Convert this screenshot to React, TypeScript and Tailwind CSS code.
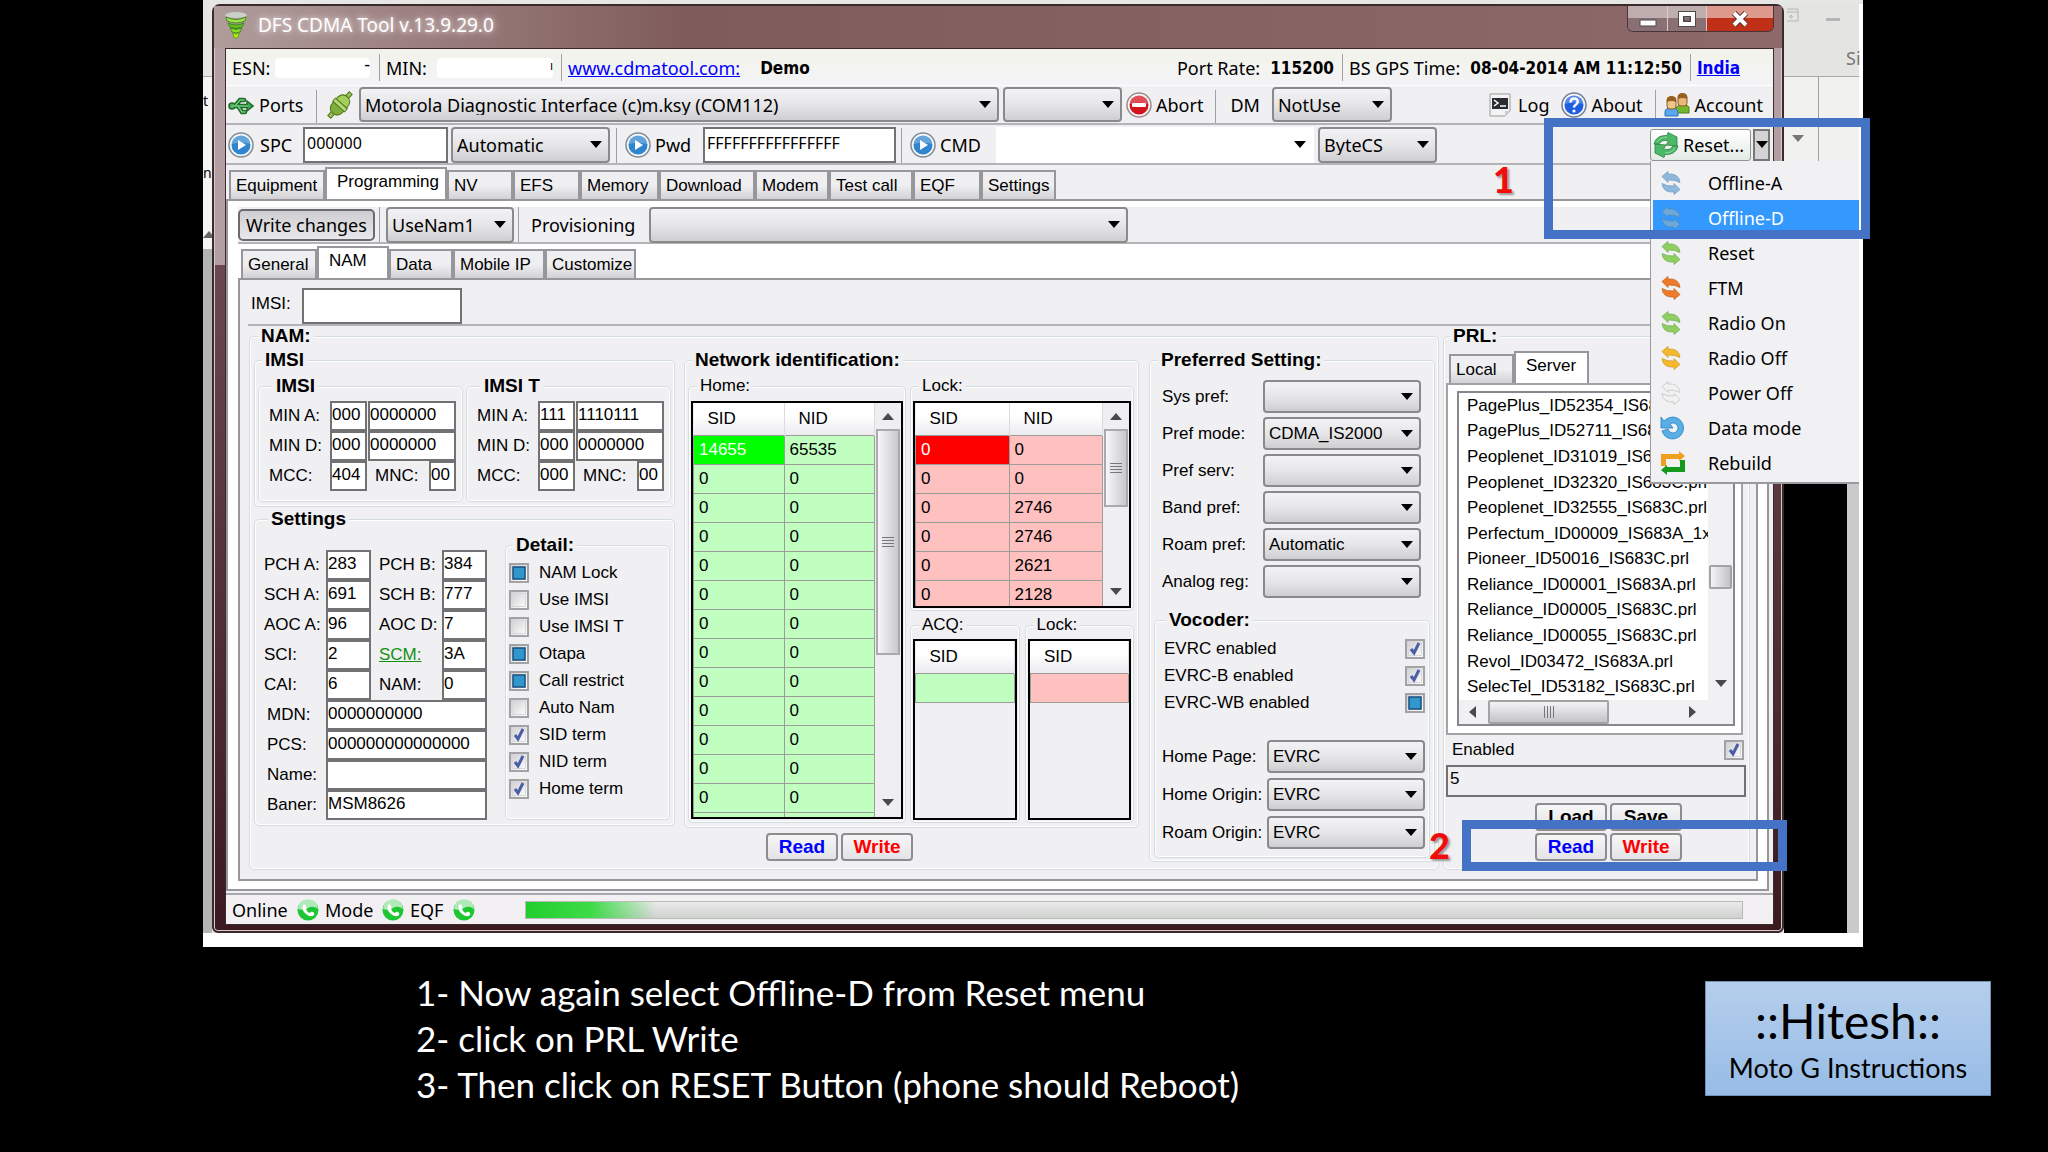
import type { ReactNode } from 'react';
import clsx from 'clsx';

const MAIN_TABS = ['Equipment', 'Programming', 'NV', 'EFS', 'Memory', 'Download', 'Modem', 'Test call', 'EQF', 'Settings'];
const MAIN_TAB_WIDTHS = ['w-[96px]', 'w-[122px]', 'w-[66px]', 'w-[67px]', 'w-[79px]', 'w-[96px]', 'w-[74px]', 'w-[84px]', 'w-[68px]', 'w-[75px]'];
const NAM_TABS = ['General', 'NAM', 'Data', 'Mobile IP', 'Customize'];
const NAM_TAB_WIDTHS = ['w-[76px]', 'w-[72px]', 'w-[64px]', 'w-[92px]', 'w-[91px]'];

const PRL_FILES = [
  'PagePlus_ID52354_IS683C.prl',
  'PagePlus_ID52711_IS683C.prl',
  'Peoplenet_ID31019_IS683C.prl',
  'Peoplenet_ID32320_IS683C.prl',
  'Peoplenet_ID32555_IS683C.prl',
  'Perfectum_ID00009_IS683A_1x.prl',
  'Pioneer_ID50016_IS683C.prl',
  'Reliance_ID00001_IS683A.prl',
  'Reliance_ID00005_IS683C.prl',
  'Reliance_ID00055_IS683C.prl',
  'Revol_ID03472_IS683A.prl',
  'SelecTel_ID53182_IS683C.prl',
];

const HOME_ROWS = [['14655', '65535'], ...Array.from({ length: 13 }, () => ['0', '0'])];
const LOCK_ROWS = [['0', '0'], ['0', '0'], ['0', '2746'], ['0', '2746'], ['0', '2621'], ['0', '2128']];

type CheckState = 'on' | 'off' | 'mixed';

const DETAILS: [string, CheckState][] = [
  ['NAM Lock', 'mixed'],
  ['Use IMSI', 'off'],
  ['Use IMSI T', 'off'],
  ['Otapa', 'mixed'],
  ['Call restrict', 'mixed'],
  ['Auto Nam', 'off'],
  ['SID term', 'on'],
  ['NID term', 'on'],
  ['Home term', 'on'],
];

/* ---------- icons ---------- */

const Triangle = ({ dir = 'down', className }: { dir?: 'up' | 'down' | 'left' | 'right'; className?: string }) => {
  const points = { down: '0,2 12,2 6,9', up: '0,9 12,9 6,2', left: '9,0 9,12 2,6', right: '3,0 3,12 10,6' }[dir];
  return (
    <svg viewBox="0 0 12 12" className={clsx('size-3 shrink-0', className)} fill="currentColor">
      <polygon points={points} />
    </svg>
  );
};

const AppIcon = () => (
  <svg viewBox="0 0 24 28" className="h-7 w-6 shrink-0">
    <ellipse cx="12" cy="4" rx="11" ry="3" fill="#c9cfc9" />
    <path d="M2 6q10 5 20 0l-1 4q-9 4-18 0z" fill="#9fe04a" stroke="#2e7d0e" strokeWidth=".8" />
    <path d="M4 12q8 4 16 0l-2 4q-6 3-12 0z" fill="#63c41c" stroke="#2e7d0e" strokeWidth=".8" />
    <path d="M6 17q6 3 12 0l-2 4q-4 2-8 0z" fill="#8be02a" stroke="#2e7d0e" strokeWidth=".8" />
    <path d="M8.500 22q3.500 2 7 0l-2 5h-3z" fill="#b6ee13" stroke="#4e9a0e" strokeWidth=".8" />
  </svg>
);

const UsbIcon = () => (
  <svg viewBox="0 0 26 20" className="h-5 w-[26px] shrink-0" fill="none" stroke="#1f6b2c" strokeLinecap="round">
    <path d="M3 11h17M7 11l5-6h4M10 11l4 6h3" strokeWidth="4.500" />
    <path d="M19 6l6 5-6 5z" fill="#3fa34d" strokeWidth="1.500" />
    <circle cx="4" cy="11" r="3" fill="#4db35c" strokeWidth="1.500" />
    <path d="M5 11h15M7 11l5-6h4M10 11l4 6h3" stroke="#6fcb7a" strokeWidth="1.500" />
  </svg>
);

const PlugIcon = () => (
  <svg viewBox="0 0 28 28" className="size-7 shrink-0">
    <g transform="rotate(42 14 14)" stroke="#4f7a1d" strokeWidth="1">
      <rect x="12" y="-2" width="4" height="7" fill="#9bbf5a" />
      <rect x="12" y="23" width="4" height="7" fill="#9bbf5a" />
      <path d="M7 12q0-9 7-9t7 9z" fill="#a5cf5c" />
      <path d="M7 16q0 9 7 9t7-9z" fill="#7fae3a" />
      <path d="M6 12h16v4H6z" fill="#b5d877" />
    </g>
  </svg>
);

const Round = ({ color, ring, children }: { color: string; ring: string; children: ReactNode }) => (
  <svg viewBox="0 0 26 26" className="size-[26px] shrink-0">
    <circle cx="13" cy="13" r="12" fill="#f4f6f8" stroke={ring} strokeWidth="1.500" />
    <circle cx="13" cy="13" r="9.500" fill={color} />
    <path d="M4 12a9 9 0 0 1 18 0q-9-3-18 0z" fill="#fff" opacity=".25" />
    {children}
  </svg>
);

const PlayIcon = () => (
  <Round color="#2f86cf" ring="#7f8b95">
    <path d="M10 8l8 5-8 5z" fill="#fff" />
  </Round>
);

const AbortIcon = () => (
  <Round color="#d4141c" ring="#a08a8a">
    <rect x="6" y="11" width="14" height="4" rx="1" fill="#fff" />
  </Round>
);

const HelpIcon = () => (
  <Round color="#1d5fe0" ring="#6f7f95">
    <path d="M9.500 10.500q0-4 3.700-4t3.500 3.300q0 1.800-1.900 3t-1.800 2.700" fill="none" stroke="#fff" strokeWidth="2.500" />
    <circle cx="13" cy="19" r="1.600" fill="#fff" />
  </Round>
);

const LogIcon = () => (
  <svg viewBox="0 0 22 24" className="h-6 w-[22px] shrink-0">
    <path d="M1 1h20v17l-5 5H1z" fill="#f4f4f4" stroke="#9a9a9a" />
    <path d="M21 18h-5v5z" fill="#cfcfcf" />
    <rect x="3" y="5" width="16" height="11" fill="#2a2e30" />
    <path d="M5 7l4 3-4 3M11 13h6" fill="none" stroke="#fff" strokeWidth="1.500" />
  </svg>
);

const AccountIcon = () => (
  <svg viewBox="0 0 26 24" className="h-6 w-[26px] shrink-0">
    <path d="M12 20v-4q0-4 7-4t6 4v4z" fill="#74b52e" stroke="#4b7f18" />
    <rect x="14" y="1" width="9" height="12" rx="3" fill="#e8b878" stroke="#8a5a20" />
    <path d="M14 6V3q1-3 4.500-3T23 3v3q-4-2-9 0z" fill="#9a5f1c" />
    <path d="M1 23v-4q0-4 6-4t7 4v4z" fill="#5aa7ee" stroke="#2d6fb5" />
    <rect x="3" y="4" width="9" height="12" rx="3" fill="#f0c68a" stroke="#8a5a20" />
    <path d="M3 9V6q1-3 4.500-3T12 6v3q-4-2-9 0z" fill="#9a5f1c" />
  </svg>
);

// Two arrows chasing each other; every menu entry only changes the colour.
const SyncIcon = ({ color, edge }: { color: string; edge: string }) => (
  <svg viewBox="0 0 22 24" className="h-6 w-[22px] shrink-0" fill={color} stroke={edge} strokeWidth=".7" strokeLinejoin="round">
    <path d="M2 5.500L8 .500V3q11-1 12 8.500Q15 8.500 8 9v2.500z" />
    <path d="M20 18.500l-6 5V21Q3 22 2 12.500q5 3 12 2.500v-2.500z" />
  </svg>
);

const ResetIcon = () => (
  <svg viewBox="0 0 26 26" className="size-[26px] shrink-0" fill="#4db868" stroke="#27803f" strokeWidth=".8" strokeLinejoin="round">
    <path d="M1 12Q3 3 14 3.500L15 .500 24 5v9l-11-1 2.500-4Q8 7 6 12.500z" />
    <path d="M25 14q-2 9-13 8.500l-1 3L2 21v-9l11 1-2.500 4Q18 19 20 13.500z" />
    <path d="M4 10q3-5 10-5M22 16q-3 5-10 5" fill="none" stroke="#9fe0ae" />
  </svg>
);

const DataIcon = () => (
  <svg viewBox="0 0 24 24" className="size-6 shrink-0">
    <path d="M1 1l3 4q4-4 9-4a11 11 0 1 1-11 14l6-2q1 4 5 4a5 5 0 1 0-3-9l3 4H1z" fill="#58aee6" stroke="#2a7fc0" strokeWidth=".8" />
  </svg>
);

const RebuildIcon = () => (
  <svg viewBox="0 0 26 24" className="h-6 w-[26px] shrink-0">
    <path d="M1 15V3h18V0l6 5-6 5V8H6v7z" fill="#f0a020" />
    <path d="M25 9v12H7v3l-6-5 6-5v2h13V9z" fill="#139a1c" />
  </svg>
);

const PhoneIcon = () => (
  <svg viewBox="0 0 22 22" className="size-[22px] shrink-0">
    <circle cx="11" cy="11" r="10.500" fill="#1fc634" />
    <path d="M1 10a10 10 0 0 1 20 0q-5-4-10-1t-10 1z" fill="#d5f2d9" opacity=".8" />
    <path d="M6 6q2-2 3 1t0 3q1 3 4 4 1-2 3-1t1 3q-3 3-8-1T6 6z" fill="#fff" />
  </svg>
);

/* ---------- controls ---------- */

const Sep = ({ className }: { className?: string }) => <span className={clsx('w-px shrink-0 self-stretch bg-[#a0a0a4]', className)} />;

interface ComboProps {
  label: string;
  value?: string;
  className?: string;
  plain?: boolean;
}

const Combo = ({ label, value = '', className, plain }: ComboProps) => (
  <div className={clsx('relative shrink-0', className)}>
    <select
      aria-label={label}
      className={clsx(
        'size-full appearance-none pl-1 pr-6 outline-none',
        plain
          ? 'bg-white'
          : 'rounded-[4px] border-2 border-[#8a898c] bg-linear-to-b from-[#f3f2f4] via-[#e6e5e8] to-[#cfced1]',
      )}
    >
      <option>{value}</option>
    </select>
    <Triangle className="pointer-events-none absolute right-2 top-1/2 -mt-1.5 text-black" />
  </div>
);

const Check = ({ id, state }: { id: string; state: CheckState }) => (
  <span className="relative size-5 shrink-0">
    <input
      id={id}
      type="checkbox"
      defaultChecked={state !== 'off'}
      className="block size-5 appearance-none border-2 border-[#a3a3a6] bg-linear-to-br from-[#cfcfd2] to-white outline-1 -outline-offset-4 outline-[#d8d8dc]"
    />
    <svg viewBox="0 0 20 20" className="pointer-events-none absolute inset-0">
      {state === 'on' && <path d="M6 10l3 4 5-10" fill="none" stroke="#4c5da8" strokeWidth="3" />}
      {state === 'mixed' && <rect x="4" y="4" width="12" height="12" fill="#2f97cc" stroke="#1b4f7c" strokeWidth="1.500" />}
    </svg>
  </span>
);

interface FieldProps {
  id: string;
  value?: string;
  className?: string;
}

const Field = ({ id, value = '', className }: FieldProps) => (
  <input
    id={id}
    aria-label={id}
    defaultValue={value}
    className={clsx('h-[30px] min-w-0 shrink-0 border-2 border-[#727174] bg-white pb-0.5 outline-none', className)}
  />
);

interface GroupProps {
  title: string;
  className?: string;
  light?: boolean;
  children: ReactNode;
}

const Group = ({ title, className, light, children }: GroupProps) => (
  <fieldset className={clsx('min-w-0 rounded-[5px] border border-[#d3dde0] shadow-[inset_0_0_0_1px_#fff]', className)}>
    <legend className={clsx('bg-[#f0eff2] px-[3px] leading-5', light ? 'ml-1.5 text-[17px]' : 'ml-1 text-[19px] font-bold')}>{title}</legend>
    {children}
  </fieldset>
);

const PushButton = ({ children, className }: { children: ReactNode; className?: string }) => (
  <button className={clsx('h-7 w-[72px] rounded-[4px] border-2 border-[#8d8c90] bg-linear-to-b from-[#f6f6f7] to-[#e4e4e6] text-[19px] leading-6 font-bold', className)}>
    {children}
  </button>
);

interface TabsProps {
  names: string[];
  widths: string[];
  active: string;
}

const Tabs = ({ names, widths, active }: TabsProps) => (
  <div role="tablist" className="flex items-end">
    {names.map((name, i) => (
      <button
        key={name}
        role="tab"
        aria-selected={name === active}
        className={clsx(
          'border-2 border-b-0 border-[#97969a] text-left whitespace-nowrap',
          widths[i],
          name === active ? 'h-8 bg-white pb-1 pl-2.5' : 'h-[29px] bg-linear-to-b from-[#efeef0] from-50% to-[#d2d1d4] pl-[5px]',
        )}
      >
        {name}
      </button>
    ))}
  </div>
);

const Grip = ({ vertical }: { vertical?: boolean }) => (
  <span className={clsx('flex gap-0.5', vertical ? 'flex-row' : 'flex-col')}>
    {[0, 1, 2, 3].map((n) => (
      <i key={n} className={clsx('bg-[#77777a]', vertical ? 'h-3 w-px' : 'h-px w-3')} />
    ))}
  </span>
);

const VScroll = ({ thumb }: { thumb: string }) => (
  <div className="flex w-[26px] shrink-0 flex-col items-center bg-[#efeff1]">
    <Triangle dir="up" className="mt-2 mb-1.5 text-[#4a4a4c]" />
    <div className={clsx('flex w-6 items-center justify-center border-2 border-[#aaaaad] bg-linear-to-r from-[#f7f7f8] to-[#c9c9cc]', thumb)}>
      <Grip />
    </div>
    <Triangle className="mt-auto mb-2 text-[#4a4a4c]" />
  </div>
);

interface GridProps {
  columns: string[];
  rows: string[][];
  tone: 'green' | 'red';
  selected?: boolean;
}

const DataGrid = ({ columns, rows, tone, selected }: GridProps) => (
  <table className="w-full table-fixed border-collapse">
    <thead>
      <tr className="h-8 bg-linear-to-b from-white from-40% to-[#ececf0]">
        {columns.map((column) => (
          <th key={column} className="border-r border-[#dcdce0] pl-3.5 text-left font-normal">
            {column}
          </th>
        ))}
      </tr>
    </thead>
    <tbody>
      {rows.map((row, r) => (
        <tr key={r} className={clsx('h-[29px]', tone === 'green' ? 'bg-[#c0ffc0]' : 'bg-[#ffc0c0]')}>
          {row.map((cell, c) => (
            <td
              key={c}
              className={clsx(
                'border border-[#9a9d9a] pl-[5px]',
                selected && r === 0 && c === 0 && 'text-white',
                selected && r === 0 && c === 0 && (tone === 'green' ? 'bg-[#00ff00]' : 'bg-[#ff0000]'),
              )}
            >
              {cell}
            </td>
          ))}
        </tr>
      ))}
    </tbody>
  </table>
);

/* ---------- window parts ---------- */

const TitleBar = () => (
  <header className="flex h-[42px] items-start bg-linear-to-r from-[#b09c9c] via-[#7f5c5b] via-30% to-[#8d6a69] pl-2.5">
    <div className="flex h-full items-center gap-2.5 pb-1">
      <AppIcon />
      <h1 className="text-[19px] text-white [text-shadow:0_0_10px_#e8dede,0_0_4px_#d8c8c8]">DFS CDMA Tool v.13.9.29.0</h1>
    </div>
    <div className="mr-2 ml-auto flex h-[26px] overflow-hidden rounded-b-md border border-t-0 border-[#4a3438]">
      <button aria-label="Minimize" className="flex w-10 items-center justify-center border-r border-[#d8cccc] bg-linear-to-b from-[#c0adad] from-50% to-[#8a7072] to-50%">
        <svg viewBox="0 0 18 8" className="mt-2 h-2 w-[18px]">
          <rect x="1" y="1" width="16" height="6" fill="#fff" stroke="#4b4b50" />
        </svg>
      </button>
      <button aria-label="Maximize" className="flex w-[39px] items-center justify-center border-r border-[#d8cccc] bg-linear-to-b from-[#c0adad] from-50% to-[#8a7072] to-50%">
        <svg viewBox="0 0 18 16" className="h-4 w-[18px]" fill="none">
          <rect x="3" y="3" width="12" height="10" stroke="#4b4b50" strokeWidth="6" />
          <rect x="3" y="3" width="12" height="10" stroke="#fff" strokeWidth="4" />
          <rect x="6" y="6" width="6" height="4" stroke="#4b4b50" />
        </svg>
      </button>
      <button aria-label="Close" className="flex w-[66px] items-center justify-center bg-linear-to-b from-[#dd9a8c] from-50% to-[#c03018] to-50%">
        <svg viewBox="0 0 18 16" className="h-4 w-[18px]">
          <path d="M3 2l12 12M15 2L3 14" stroke="#55302c" strokeWidth="6" />
          <path d="M3 2l12 12M15 2L3 14" stroke="#fff" strokeWidth="4" />
        </svg>
      </button>
    </div>
  </header>
);

const Strong = ({ children, className }: { children: ReactNode; className?: string }) => (
  <b className={clsx("font-['DejaVu_Sans_Condensed','DejaVu_Sans',sans-serif] text-[17px]", className)}>{children}</b>
);

const InfoBar = () => (
  <div className="flex h-9 items-center bg-linear-to-b from-[#f2f3ea] to-[#f4f3f6] pt-px pl-1.5 whitespace-nowrap">
    <span className="w-[43px]">ESN:</span>
    <span className="h-5 w-[95px] rounded bg-white text-right leading-3">-</span>
    <Sep className="my-1 mr-1.5 ml-[9px]" />
    <span className="w-[51px]">MIN:</span>
    <span className="h-5 w-[116px] rounded bg-white text-right text-xs">ı</span>
    <Sep className="my-1 mr-1.5 ml-2" />
    <a href="#site" className="text-[#0000ff] underline">
      www.cdmatool.com:
    </a>
    <Strong className="ml-5">Demo</Strong>
    <span className="ml-auto">Port Rate:</span>
    <Strong className="ml-2.5">115200</Strong>
    <Sep className="my-1 mr-1.5 ml-2" />
    <span>BS GPS Time:</span>
    <Strong className="ml-2.5">08-04-2014 AM 11:12:50</Strong>
    <Sep className="my-1 mr-1.5 ml-2" />
    <a href="#region" className="mr-[33px] text-[#0000ff] underline">
      <Strong>India</Strong>
    </a>
  </div>
);

const PortBar = () => (
  <div className="flex h-10 items-center border-t border-b-2 border-t-white border-b-[#b4b3b7] pl-0.5">
    <button className="flex w-[88px] items-center gap-[5px]">
      <UsbIcon />
      Ports
    </button>
    <Sep className="mt-1" />
    <button aria-label="Connect" className="mr-[5px] ml-[9px]">
      <PlugIcon />
    </button>
    <Combo label="Port" value="Motorola Diagnostic Interface (c)m.ksy (COM112)" className="h-[35px] w-[640px]" />
    <Combo label="Modem" className="ml-1 h-[35px] w-[119px]" />
    <button className="ml-1 flex items-center gap-1">
      <AbortIcon />
      Abort
    </button>
    <Sep className="mt-1 mr-3.5 ml-3" />
    <span>DM</span>
    <Combo label="DM" value="NotUse" className="ml-3 h-[35px] w-[120px]" />
    <button className="ml-auto flex items-center gap-[7px]">
      <LogIcon />
      Log
    </button>
    <button className="ml-3 flex items-center gap-1">
      <HelpIcon />
      About
    </button>
    <Sep className="mt-1 mr-2 ml-3" />
    <button className="mr-2.5 flex items-center gap-[5px]">
      <AccountIcon />
      Account
    </button>
  </div>
);

const RESET_ITEMS: [string, ReactNode][] = [
  ['Offline-A', <SyncIcon color="#8fb8dc" edge="#6f97bd" />],
  ['Offline-D', <SyncIcon color="#6fa8d8" edge="#4d86bb" />],
  ['Reset', <SyncIcon color="#8fcf62" edge="#6fa84a" />],
  ['FTM', <SyncIcon color="#ee7a2a" edge="#c05a18" />],
  ['Radio On', <SyncIcon color="#8fcf62" edge="#6fa84a" />],
  ['Radio Off', <SyncIcon color="#f5b92e" edge="#cf9312" />],
  ['Power Off', <SyncIcon color="#f2f2f2" edge="#bdbdbd" />],
  ['Data mode', <DataIcon />],
  ['Rebuild', <RebuildIcon />],
];

const ResetMenu = () => (
  <div role="menu" className="absolute top-[34px] left-0 z-20 w-[209px] border-b-2 border-l border-[#9a9a9e] bg-[#f1f1f3] pt-1 pb-0.5 pl-0.5">
    {RESET_ITEMS.map(([name, icon]) => (
      <button
        key={name}
        role="menuitem"
        className={clsx('flex h-[35px] w-full items-center pt-0.5 pl-[7px] text-left', name === 'Offline-D' ? 'bg-[#3399ff] text-white' : 'text-black')}
      >
        <span className="w-12">{icon}</span>
        {name}
      </button>
    ))}
  </div>
);

const CommandBar = () => (
  <div className="flex h-10 items-center border-b-2 border-[#b4b3b7] pt-px pl-0.5">
    <button className="flex w-[75px] items-center gap-1.5">
      <PlayIcon />
      SPC
    </button>
    <Field id="spc" value="000000" className="h-9! w-[145px] pb-1! pl-0.5! text-base" />
    <Combo label="SPC mode" value="Automatic" className="ml-[3px] h-9 w-[159px]" />
    <Sep className="mt-0.5 mr-2 ml-1.5" />
    <button className="flex w-[78px] items-center gap-1">
      <PlayIcon />
      Pwd
    </button>
    <Field id="pwd" value="FFFFFFFFFFFFFFFF" className="h-9! w-[193px] pb-1! pl-0.5! text-base" />
    <Sep className="mt-0.5 mr-2 ml-[5px]" />
    <button className="flex w-[86px] items-center gap-1">
      <PlayIcon />
      CMD
    </button>
    <Combo label="Command" plain className="h-9 w-[318px]" />
    <Combo label="Byte order" value="ByteCS" className="ml-1 h-9 w-[119px]" />
    <div className="relative mr-[3px] ml-auto flex h-9 items-center gap-0.5">
      <button className="flex h-8 w-[101px] items-center gap-1 rounded-[3px] border border-[#8f9492] bg-linear-to-b from-white to-[#e4ebe6] pl-0.5 whitespace-nowrap">
        <ResetIcon />
        Reset...
      </button>
      <button aria-label="Reset options" className="flex h-8 w-[17px] items-center justify-center border-2 border-[#77777a] bg-[#d3d3d5]">
        <Triangle />
      </button>
      <ResetMenu />
      {/* step 1 marker */}
      <div className="pointer-events-none absolute -top-[9px] -left-[106px] z-30 h-[121px] w-[326px] border-[9px] border-[#4472c4]" />
      <span className="absolute top-7 -left-[157px] font-[Lato] text-[36px] leading-12 font-black text-[#f20d0d] [text-shadow:2px_2px_2px_#999]">1</span>
    </div>
  </div>
);

const MinRow = ({ prefix, name, a, b }: { prefix: string; name: string; a: string; b: string }) => (
  <div className="flex items-center">
    <label htmlFor={`${prefix} ${name} area`} className="w-[61px]">
      {name}:
    </label>
    <Field id={`${prefix} ${name} area`} value={a} className="w-[37px]" />
    <Field id={`${prefix} ${name} number`} value={b} className="ml-px w-[88px]" />
  </div>
);

interface ImsiProps {
  title: string;
  minA: [string, string];
  mcc: string;
}

const ImsiGroup = ({ title, minA, mcc }: ImsiProps) => (
  <Group title={title} className="flex-1 pt-[5px] pb-2.5 pl-2.5">
    <MinRow prefix={title} name="MIN A" a={minA[0]} b={minA[1]} />
    <MinRow prefix={title} name="MIN D" a="000" b="0000000" />
    <div className="flex items-center">
      <label htmlFor={`${title} mcc`} className="w-[61px]">
        MCC:
      </label>
      <Field id={`${title} mcc`} value={mcc} className="w-[37px]" />
      <label htmlFor={`${title} mnc`} className="w-[62px] pl-2">
        MNC:
      </label>
      <Field id={`${title} mnc`} value="00" className="w-[27px]" />
    </div>
  </Group>
);

const PAIRS: [string, string, string, string][] = [
  ['PCH A:', '283', 'PCH B:', '384'],
  ['SCH A:', '691', 'SCH B:', '777'],
  ['AOC A:', '96', 'AOC D:', '7'],
  ['SCI:', '2', 'SCM:', '3A'],
  ['CAI:', '6', 'NAM:', '0'],
];

const WIDE: [string, string][] = [
  ['MDN:', '0000000000'],
  ['PCS:', '000000000000000'],
  ['Name:', ''],
  ['Baner:', 'MSM8626'],
];

const SettingsGroup = () => (
  <Group title="Settings" className="flex gap-[18px] pt-1.5 pr-1 pb-[5px] pl-[9px]">
    <div className="w-[223px] shrink-0 pt-[15px]">
      {PAIRS.map(([l1, v1, l2, v2]) => (
        <div key={l1} className="flex items-center">
          <label htmlFor={l1} className="w-[62px]">
            {l1}
          </label>
          <Field id={l1} value={v1} className="w-[45px]" />
          <label htmlFor={l2} className="w-[71px] pl-2 whitespace-nowrap">
            {l2 === 'SCM:' ? (
              <a href="#scm" className="text-[#129012] underline">
                {l2}
              </a>
            ) : (
              l2
            )}
          </label>
          <Field id={l2} value={v2} className="w-[45px]" />
        </div>
      ))}
      {WIDE.map(([label, value]) => (
        <div key={label} className="flex items-center">
          <label htmlFor={label} className="w-[62px] pl-[3px]">
            {label}
          </label>
          <Field id={label} value={value} className="w-[161px]" />
        </div>
      ))}
    </div>
    <Group title="Detail:" className="min-w-0 flex-1 pt-1 pb-4 pl-[3px]">
      {DETAILS.map(([name, state]) => (
        <div key={name} className="flex h-[27px] items-center gap-2.5">
          <Check id={name} state={state} />
          <label htmlFor={name}>{name}</label>
        </div>
      ))}
    </Group>
  </Group>
);

const NetworkGroup = () => (
  <Group title="Network identification:" className="flex gap-1 pt-1.5 pr-1 pb-1 pl-[3px]">
    <Group title="Home:" light className="flex-1 px-0.5 pt-[5px] pb-0.5">
      <div className="flex h-[418px] overflow-hidden border-2 border-black bg-[#f0eff2]">
        <div className="flex-1">
          <DataGrid columns={['SID', 'NID']} rows={HOME_ROWS} tone="green" selected />
        </div>
        <VScroll thumb="h-[226px]" />
      </div>
    </Group>
    <div className="flex w-[224px] flex-col gap-1">
      <Group title="Lock:" light className="px-0.5 pt-[5px] pb-0.5">
        <div className="flex h-[207px] overflow-hidden border-2 border-black bg-[#f0eff2]">
          <div className="flex-1">
            <DataGrid columns={['SID', 'NID']} rows={LOCK_ROWS} tone="red" selected />
          </div>
          <VScroll thumb="h-[78px]" />
        </div>
      </Group>
      <div className="flex gap-[5px]">
        <Group title="ACQ:" light className="flex-1 px-0.5 pt-1 pb-0.5">
          <div className="h-[181px] border-2 border-black bg-[#f0eff2]">
            <DataGrid columns={['SID']} rows={[['']]} tone="green" />
          </div>
        </Group>
        <Group title="Lock:" light className="flex-1 px-0.5 pt-1 pb-0.5">
          <div className="h-[181px] border-2 border-black bg-[#f0eff2]">
            <DataGrid columns={['SID']} rows={[['']]} tone="red" />
          </div>
        </Group>
      </div>
    </div>
  </Group>
);

const PREFS: [string, string][] = [
  ['Sys pref:', ''],
  ['Pref mode:', 'CDMA_IS2000'],
  ['Pref serv:', ''],
  ['Band pref:', ''],
  ['Roam pref:', 'Automatic'],
  ['Analog reg:', ''],
];

const VOCODERS: [string, CheckState][] = [
  ['EVRC enabled', 'on'],
  ['EVRC-B enabled', 'on'],
  ['EVRC-WB enabled', 'mixed'],
];

const PreferredGroup = () => (
  <Group title="Preferred Setting:" className="px-1 pt-2.5 pb-[3px]">
    <div className="flex flex-col gap-1 pl-2">
      {PREFS.map(([label, value]) => (
        <div key={label} className="flex items-center">
          <span className="w-[101px]">{label}</span>
          <Combo label={label} value={value} className="h-[33px] w-[158px]" />
        </div>
      ))}
    </div>
    <Group title="Vocoder:" className="mt-3 pt-[5px] pr-1 pb-2 pl-[7px]">
      {VOCODERS.map(([name, state]) => (
        <div key={name} className="flex h-[27px] items-center justify-between pl-0.5">
          <label htmlFor={name}>{name}</label>
          <Check id={name} state={state} />
        </div>
      ))}
      <div className="mt-6 flex flex-col gap-[5px]">
        {['Home Page:', 'Home Origin:', 'Roam Origin:'].map((label) => (
          <div key={label} className="flex items-center">
            <span className="w-[106px]">{label}</span>
            <Combo label={label} value="EVRC" className="h-[33px] w-[158px]" />
          </div>
        ))}
      </div>
    </Group>
  </Group>
);

const PrlGroup = () => (
  <Group title="PRL:" className="w-[307px] shrink-0 px-0.5 pt-[5px] pb-2">
    <div className="pl-[3px]">
      <Tabs names={['Local', 'Server']} widths={['w-[65px]', 'w-[75px]']} active="Server" />
    </div>
    <div className="mr-1 border-2 border-[#a3a2a6] bg-white pt-1.5 pr-1.5 pb-[7px] pl-[9px]">
      <div className="border-2 border-[#88878b]">
        <div className="flex h-[307px]">
          <ul role="listbox" aria-label="PRL files" className="grid min-w-0 flex-1 grid-rows-12 overflow-hidden pl-2">
            {PRL_FILES.map((file) => (
              <li key={file} role="option" aria-selected={false} className="flex min-h-0 items-center whitespace-nowrap">
                {file}
              </li>
            ))}
          </ul>
          <div className="flex w-[25px] flex-col items-center bg-[#f1f0f3]">
            <Triangle dir="up" className="mt-2.5 text-[#4a4a4c]" />
            <div className="mt-[150px] h-6 w-[23px] rounded-xs border-2 border-[#a3a3a6] bg-linear-to-r from-[#f4f4f5] to-[#c4c4c8]" />
            <Triangle className="mt-auto mb-2.5 text-[#4a4a4c]" />
          </div>
        </div>
        <div className="flex h-6 items-center bg-[#f1f0f3] pr-[35px] pl-2">
          <Triangle dir="left" className="text-[#4a4a4c]" />
          <div className="ml-[9px] flex h-6 w-[121px] items-center justify-center rounded-xs border-2 border-[#a3a3a6] bg-linear-to-b from-[#f4f4f5] to-[#c4c4c8]">
            <Grip vertical />
          </div>
          <Triangle dir="right" className="ml-auto text-[#4a4a4c]" />
        </div>
      </div>
    </div>
    <div className="flex h-[30px] items-center justify-between pr-[3px] pl-1.5">
      <label htmlFor="prl-enabled">Enabled</label>
      <Check id="prl-enabled" state="on" />
    </div>
    <Field id="prl-index" value="5" className="block h-8! w-[300px] bg-[#f0eff2]! pb-1! pl-0.5!" />
    <div className="mt-1.5 ml-[89px] flex gap-[3px]">
      <PushButton>Load</PushButton>
      <PushButton>Save</PushButton>
    </div>
    <div className="relative mt-0.5 ml-[89px] flex gap-[3px]">
      <PushButton className="text-[#0000ff]">Read</PushButton>
      <PushButton className="text-[#ff0000]">Write</PushButton>
      {/* step 2 marker */}
      <div className="pointer-events-none absolute -top-[13px] -left-[73px] h-[51px] w-[325px] border-[9px] border-[#4472c4]" />
      <span className="absolute -top-3 -left-[106px] font-[Lato] text-[36px] leading-12 font-black text-[#f20d0d] [text-shadow:2px_2px_2px_#999]">2</span>
    </div>
  </Group>
);

const NamPage = () => (
  <div className="border-2 border-[#97969a] bg-[#f0eff2] pb-[9px] pl-2 font-['Liberation_Sans',sans-serif] text-[17px]">
    <div className="flex h-[46px] items-end border-b-2 border-[#b4b3b7] pl-[3px]">
      <label htmlFor="imsi" className="w-[51px] self-center pt-1">
        IMSI:
      </label>
      <Field id="imsi" className="h-9! w-[160px]" />
    </div>
    <div className="flex gap-1 pr-1.5 pl-px">
      <Group title="NAM:" className="flex flex-1 pt-1 pr-[3px] pb-1 pl-1">
        <div className="flex w-[421px] shrink-0 flex-col gap-0.5">
          <Group title="IMSI" className="flex gap-[3px] px-[3px] pt-1.5 pb-1">
            <ImsiGroup title="IMSI" minA={['000', '0000000']} mcc="404" />
            <ImsiGroup title="IMSI T" minA={['111', '1110111']} mcc="000" />
          </Group>
          <SettingsGroup />
        </div>
        <div className="mr-2.5 ml-[9px] flex-1">
          <NetworkGroup />
          <div className="mt-[5px] ml-[82px] flex gap-[3px]">
            <PushButton className="text-[#0000ff]">Read</PushButton>
            <PushButton className="text-[#ff0000]">Write</PushButton>
          </div>
        </div>
        <div className="w-[286px] shrink-0">
          <PreferredGroup />
        </div>
      </Group>
      <PrlGroup />
    </div>
  </div>
);

const StatusBar = () => (
  <footer className="flex h-[31px] items-center border-t-2 border-[#a8a7ab] bg-[#f3f0f3] pl-1.5">
    <span className="w-[65px]">Online</span>
    <PhoneIcon />
    <span className="ml-1.5 w-[57px]">Mode</span>
    <PhoneIcon />
    <span className="ml-1.5 w-[43px]">EQF</span>
    <PhoneIcon />
    <div
      role="progressbar"
      aria-label="Progress"
      className="mr-[30px] ml-[50px] h-[18px] flex-1 border border-[#b9bbb9] bg-linear-to-b from-[#e9eae9] to-[#cfd1cf]"
    >
      <div className="h-full w-[130px] bg-linear-to-r from-[#1fce2c] via-[#3ddb48] to-transparent" />
    </div>
  </footer>
);

const ToolWindow = () => (
  <div className="min-w-0 flex-1 rounded-t-lg rounded-b-md border-2 border-[#3a2a2c] bg-linear-to-b from-[#b39ea2] from-28% via-[#6b4850] via-28% to-[#3a1a20] shadow-[inset_0_0_0_1px_#d8c8ca]">
    <TitleBar />
    <div className="mr-2 mb-1.5 ml-[11px] border border-[#3a2a2c] bg-[#f0eff2]">
      <InfoBar />
      <PortBar />
      <CommandBar />
      <div className="pt-0.5 pl-[3px] font-['Liberation_Sans',sans-serif] text-[17px]">
        <Tabs names={MAIN_TABS} widths={MAIN_TAB_WIDTHS} active="Programming" />
      </div>
      <div className="mr-1 mb-0.5 border-2 border-[#97969a] bg-white pr-[9px] pb-2 pl-2.5">
        <div className="mt-1.5 flex h-[37px] items-center border-b-2 border-[#b4b3b7] bg-[#f0eff2]">
          <button className="h-8 w-[137px] rounded-[5px] border-2 border-[#6b6a6e] bg-linear-to-b from-[#cfced2] to-[#e8e7ea] leading-6 whitespace-nowrap">Write changes</button>
          <Sep className="mr-1.5 ml-1" />
          <Combo label="NAM slot" value="UseNam1" className="h-9 w-[128px]" />
          <Sep className="mr-3 ml-1" />
          <span className="w-[118px]">Provisioning</span>
          <Combo label="Provisioning" className="h-9 w-[479px]" />
        </div>
        <div className="pt-0.5 pl-[3px] font-['Liberation_Sans',sans-serif] text-[17px]">
          <Tabs names={NAM_TABS} widths={NAM_TAB_WIDTHS} active="NAM" />
        </div>
        <NamPage />
      </div>
      <StatusBar />
    </div>
  </div>
);

// Slivers of the desktop that stay visible beside the tool window.
const LeftStrip = () => (
  <div className="flex w-[9px] flex-col overflow-hidden text-sm leading-4">
    <div className="h-[73px] border-b border-[#a9a9a9] bg-[#e6e6e4]" />
    <div className="h-[172px] bg-[#f4f4f4] pt-4">
      t
      <div className="mt-14">n</div>
      <Triangle dir="up" className="mt-12 text-[#666]" />
    </div>
    <div className="flex-1 bg-[#b2b6b3]" />
  </div>
);

const RightStrip = () => (
  <div className="flex w-[79px] flex-col border-r-4 border-white">
    <div className="flex h-[73px] justify-between border-b border-[#a9a9a9] bg-[#e4e4e2] pt-1 pl-[3px] text-[#777]">
      <svg viewBox="0 0 12 14" className="h-3.5 w-3" fill="none" stroke="#b5b5b5">
        <path d="M0 1h11v12H0M0 4h11M4 11V7M2 9l2-2 2 2" />
      </svg>
      <span className="mt-2.5 ml-5 h-[3px] w-3.5 bg-[#b5b5b5]" />
      <span className="mt-10 w-[13px]">Si</span>
    </div>
    <div className="h-[87px] bg-[#f1f1ef]">
      <div className="h-full w-[35px] border-r border-[#a0a0a0] pt-[56px] pl-2 text-[#777]">
        <Triangle className="size-2.5" />
      </div>
    </div>
    <div className="flex flex-1 justify-end bg-black">
      <div className="w-3 bg-[#cbc9cc]" />
    </div>
  </div>
);

export default function App() {
  return (
    <main className="min-h-screen bg-black font-['Noto_Sans',sans-serif] text-[18px] leading-5 text-black">
      <section className="mr-[185px] ml-[203px] border-b-[14px] border-white bg-[#e6e6e4] pt-1">
        <div className="flex items-stretch">
          <LeftStrip />
          <ToolWindow />
          <RightStrip />
        </div>
      </section>
      <section className="flex items-start justify-between pt-[22px] pr-[57px] pl-[416px] font-[Lato,sans-serif]">
        <ol className="text-[35px] leading-[46px] text-white">
          <li>1- Now again select Offline-D from Reset menu</li>
          <li>2- click on PRL Write</li>
          <li>3- Then click on RESET Button (phone should Reboot)</li>
        </ol>
        <div className="mt-3 h-[115px] w-[286px] border border-[#7390b5] bg-linear-to-b from-[#b5ceec] to-[#97bce6] pt-3 text-center">
          <p className="text-[48px] leading-[54px]">::Hitesh::</p>
          <p className="text-[27px] leading-10">Moto G Instructions</p>
        </div>
      </section>
    </main>
  );
}
